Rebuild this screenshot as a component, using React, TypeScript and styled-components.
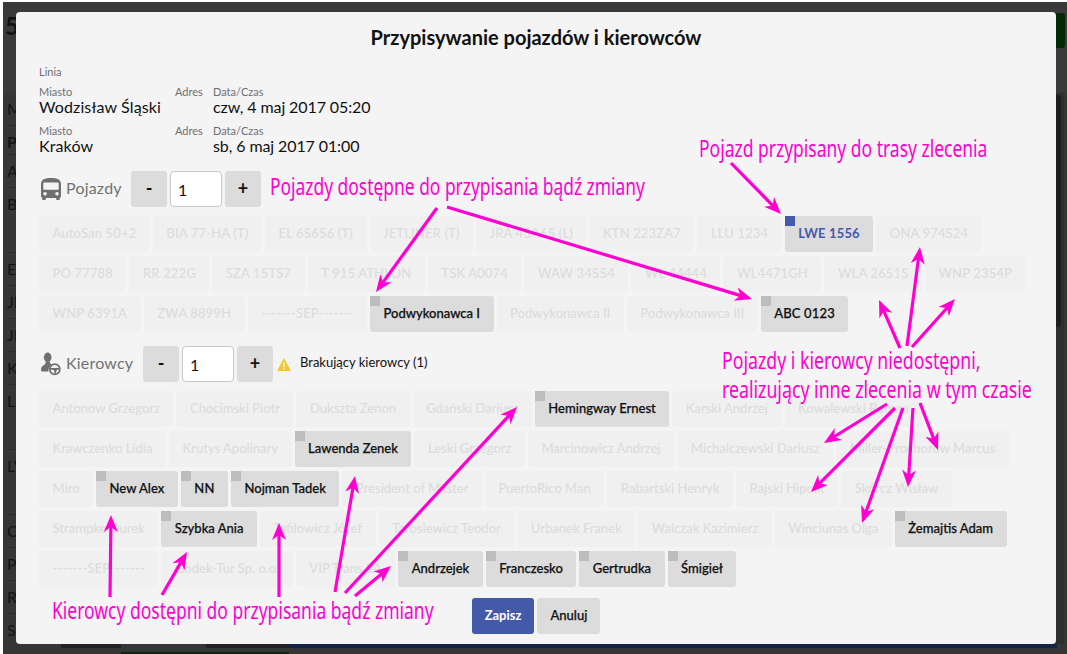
import styled, { createGlobalStyle } from "styled-components";

const GlobalStyle = createGlobalStyle`
  html, body { margin: 0; padding: 0; background: #fff; }
  body { font-family: "Lato", "Liberation Sans", sans-serif; overflow: hidden; }
`;

const PINK = "#ff00d2";

type Mark = "free" | "assigned";

const vehicles: [string, Mark?][] = [
  ["AutoSan 50+2"], ["BIA 77-HA (T)"], ["EL 65656 (T)"], ["JETLINER (T)"], ["JRA 45A65 (L)"], ["KTN 223ZA7"], ["LLU 1234"],
  ["LWE 1556", "assigned"], ["ONA 974S24"], ["PO 77788"], ["RR 222G"], ["SZA 15TS7"], ["T 915 ATHLON"], ["TSK A0074"],
  ["WAW 34554"], ["WL 44444"], ["WL4471GH"], ["WLA 2651S"], ["WNP 2354P"], ["WNP 6391A"], ["ZWA 8899H"], ["-------SEP-------"],
  ["Podwykonawca I", "free"], ["Podwykonawca II"], ["Podwykonawca III"], ["ABC 0123", "free"],
];

const drivers: [string, Mark?][] = [
  ["Antonow Grzegorz"], ["Chocimski Piotr"], ["Dukszta Zenon"], ["Gdański Dariusz"], ["Hemingway Ernest", "free"], ["Karski Andrzej"],
  ["Kowalewski Roman"], ["Krawczenko Lidia"], ["Krutys Apolinary"], ["Lawenda Zenek", "free"], ["Leski Grzegorz"], ["Marcinowicz Andrzej"],
  ["Michalczewski Dariusz"], ["Miller-Prochorow Marcus"], ["Miro"], ["New Alex", "free"], ["NN", "free"], ["Nojman Tadek", "free"],
  ["President of Master"], ["PuertoRico Man"], ["Rabartski Henryk"], ["Rajski Hipolit"], ["Skórcz Wisław"], ["Strampke Durek"],
  ["Szybka Ania", "free"], ["Tafilowicz Józef"], ["Tarosiewicz Teodor"], ["Urbanek Franek"], ["Walczak Kazimierz"], ["Winciunas Olga"],
  ["Żemajtis Adam", "free"], ["-------SEP-------"], ["Godek-Tur Sp. o.o."], ["VIP Trans SA"], ["Andrzejek", "free"], ["Franczesko", "free"],
  ["Gertrudka", "free"], ["Śmigieł", "free"],
];

// page behind the dialog: only the left edge of each row is visible
const backRows: [number, string, boolean?][] = [
  [33, "M"], [29, "P", true], [33, "A"], [65, "B"], [33, "E"], [33, "JE"], [33, "JF"], [33, "K"], [65, "LI"], [65, "LV"], [33, "O"], [33, "P"], [33, "R"], [33, "SZ"],
];

const arrows = [
  [731, 163, 781, 214], [437, 208, 376, 292], [447, 207, 752, 299],
  [900, 348, 879, 300], [907, 346, 920, 247], [912, 347, 955, 299],
  [887, 404, 824, 443], [895, 408, 811, 492], [903, 408, 862, 523], [913, 408, 908, 487], [920, 403, 938, 450],
  [110, 597, 111, 515], [162, 595, 187, 552], [279, 597, 279, 523], [335, 592, 355, 476], [345, 593, 517, 407], [355, 596, 391, 566],
];

const Page = styled.div`
  position: relative;
  width: 1064px;
  height: 652px;
  margin: 2px 0 0 3px;
  background: #363636;
  overflow: hidden;
  display: flex;
  flex-direction: column;
`;

const BackHead = styled.header`
  height: 91px;
  flex: none;
  display: flex;
  justify-content: space-between;
  align-items: flex-start;
  padding: 9px 2px 0 2px;
  box-sizing: border-box;
  background: #3a3a3a;
`;

const BackTitle = styled.div`
  font-size: 24px;
  font-weight: 700;
  color: #111;
`;

const GreenButton = styled.div`
  width: 20px;
  height: 35px;
  margin-top: 2px;
  background: #032a06;
  border-radius: 3px;
`;

const BackBody = styled.div`
  flex: 1;
  display: flex;
  justify-content: space-between;
  min-height: 0;
`;

const BackTable = styled.div`
  flex: 1;
  padding-left: 4px;
`;

const BackRow = styled.div<{ $h: number; $bold?: boolean }>`
  height: ${(p) => p.$h}px;
  box-sizing: border-box;
  border-bottom: 1px solid #2a2a2a;
  padding-top: 6px;
  font-size: 16px;
  line-height: 20px;
  font-weight: ${(p) => (p.$bold ? 700 : 400)};
  color: #141414;
`;

const BackSide = styled.aside`
  width: 8px;
  height: 100%;
  flex: none;
  background: #2e2e2e;
  margin-right: 3px;
  padding-top: 2px;
`;

const BackSidePanel = styled.div`
  width: 5px;
  height: 232px;
  background: #1e1e1e;
  border-radius: 0 3px 3px 0;
`;

const BackFoot = styled.div`
  position: absolute;
  left: 0;
  right: 0;
  bottom: 0;
  height: 10px;
  display: flex;
  background: #363636;
`;

const FootCell = styled.div<{ $w: number; $top: string; $bottom?: string }>`
  width: ${(p) => p.$w}px;
  flex: none;
  height: 100%;
  background: linear-gradient(${(p) => p.$top} 0 4px, transparent 4px 8px, ${(p) => p.$bottom || "transparent"} 8px);
`;

const Dialog = styled.div`
  position: absolute;
  left: 13px;
  top: 10px;
  width: 1040px;
  height: 632px;
  box-sizing: border-box;
  padding: 0 23px;
  background: #f4f4f4;
  border-radius: 4px;
  color: #111;
`;

const Title = styled.h1`
  margin: 0;
  height: 53px;
  font-size: 20px;
  line-height: 50px;
  font-weight: 700;
  text-align: center;
  color: #111;
`;

const LineLabel = styled.div`
  font-size: 11px;
  line-height: 14px;
  color: #6f6f6f;
  margin-bottom: 6px;
`;

const RoutePoint = styled.div`
  display: grid;
  grid-template-columns: 136px 38px 1fr;
  margin-bottom: 8px;
`;

const Field = styled.div`
  display: flex;
  flex-direction: column;
`;

const FieldLabel = styled.span`
  font-size: 11px;
  line-height: 14px;
  color: #6f6f6f;
`;

const FieldValue = styled.span`
  font-size: 16px;
  line-height: 15px;
  padding-bottom: 2px;
  color: #111;
`;

const CityValue = styled(FieldValue)`
  letter-spacing: 0.12px;
`;

const DateValue = styled(FieldValue)`
  letter-spacing: -0.1px;
`;

const CounterRow = styled.div<{ $top: number; $labelWidth: number }>`
  display: flex;
  align-items: center;
  height: 36px;
  margin-top: ${(p) => p.$top}px;
  margin-bottom: 9px;
  & > div:first-child {
    width: ${(p) => p.$labelWidth}px;
  }
`;

const CounterLabel = styled.div`
  display: flex;
  align-items: center;
  flex: none;
  box-sizing: border-box;
  padding-left: 2px;
  gap: 5px;
  font-size: 16px;
  letter-spacing: 0.2px;
  color: #727272;
  height: 100%;
`;

const CounterName = styled.span`
  padding-bottom: 3px;
`;

const StepButton = styled.button`
  width: 36px;
  height: 36px;
  flex: none;
  padding: 0 0 3px;
  border: 0;
  border-radius: 3px;
  background: #dcdcdc;
  font-family: inherit;
  font-size: 18px;
  font-weight: 700;
  color: #111;
`;

const CountInput = styled.input`
  width: 52px;
  height: 36px;
  flex: none;
  box-sizing: border-box;
  margin: 0 3px;
  padding: 0 7px;
  border: 1px solid #c9c9c9;
  border-radius: 4px;
  background: #fff;
  font-family: inherit;
  font-size: 16px;
  color: #111;
`;

const Warning = styled.div`
  display: flex;
  align-items: center;
  margin-left: 4px;
  gap: 9px;
  font-size: 13px;
  color: #111;
  span {
    padding-bottom: 4px;
  }
`;

const ChipList = styled.div`
  display: flex;
  flex-wrap: wrap;
  gap: 4px 3px;
`;

const Chip = styled.button<{ $mark?: Mark; $plate?: boolean }>`
  position: relative;
  height: 36px;
  padding: 0 13.5px 3px;
  border: 0;
  border-radius: 3px;
  font-family: inherit;
  font-size: 13px;
  letter-spacing: ${(p) => (p.$plate ? "0.15px" : "0")};
  font-weight: ${(p) => (p.$mark === "assigned" ? 700 : 500)};
  -webkit-text-stroke: ${(p) => (p.$mark === "free" ? "0.25px" : "0")};
  white-space: nowrap;
  background: ${(p) => (p.$mark ? "#dcdcdc" : "#f0f0f0")};
  color: ${(p) => (p.$mark === "assigned" ? "#4559a9" : p.$mark ? "#111" : "#dcdcdc")};
`;

const Corner = styled.span<{ $mark: Mark }>`
  position: absolute;
  left: 0;
  top: 0;
  width: 10px;
  height: 10px;
  background: ${(p) => (p.$mark === "assigned" ? "#4559a9" : "#bdbdbd")};
`;

const Actions = styled.div`
  display: flex;
  justify-content: center;
  gap: 3px;
  margin-top: 11px;
`;

const ActionButton = styled.button<{ $primary?: boolean }>`
  height: 36px;
  padding: 0 13px 3px;
  border: 0;
  border-radius: 3px;
  font-family: inherit;
  font-size: 13px;
  font-weight: ${(p) => (p.$primary ? 700 : 500)};
  -webkit-text-stroke: ${(p) => (p.$primary ? "0" : "0.25px")};
  background: ${(p) => (p.$primary ? "#4559a9" : "#dcdcdc")};
  color: ${(p) => (p.$primary ? "#fff" : "#111")};
`;

// annotations drawn on top of the screenshot, narrowed because no condensed font is installed
const Note = styled.div<{ $x: number; $y: number; $sx: number }>`
  position: absolute;
  left: ${(p) => p.$x}px;
  top: ${(p) => p.$y}px;
  font-family: "Noto Sans", sans-serif;
  font-size: 23px;
  line-height: 29px;
  white-space: nowrap;
  color: ${PINK};
  transform: scaleX(${(p) => p.$sx});
  transform-origin: left center;
`;

const ArrowLayer = styled.svg`
  position: absolute;
  left: -3px;
  top: -2px;
  pointer-events: none;
`;

function Arrow({ d }: { d: number[] }) {
  const [x1, y1, x2, y2] = d;
  const len = Math.hypot(x2 - x1, y2 - y1);
  const ux = (x2 - x1) / len;
  const uy = (y2 - y1) / len;
  const bx = x2 - ux * 17;
  const by = y2 - uy * 17;
  const nx = -uy;
  const ny = ux;
  const head = [
    `${x2},${y2}`,
    `${bx + nx * 7},${by + ny * 7}`,
    `${x2 - ux * 12},${y2 - uy * 12}`,
    `${bx - nx * 7},${by - ny * 7}`,
  ].join(" ");
  return (
    <g>
      <line x1={x1} y1={y1} x2={x2 - ux * 10} y2={y2 - uy * 10} stroke={PINK} strokeWidth={3.2} />
      <polygon points={head} fill={PINK} />
    </g>
  );
}

function BusIcon() {
  return (
    <svg width="20" height="22" viewBox="0 0 20 22">
      <path
        fill="#707070"
        fillRule="evenodd"
        d="M10 0C4 0 0 1.5 0 6v12c0 1 .5 1.6 1.2 1.8V21c0 .6.4 1 1 1h1.6c.6 0 1-.4 1-1v-1h10.400v1c0 .6.4 1 1 1h1.600c.6 0 1-.4 1-1v-1.200C19.500 19.600 20 19 20 18V6c0-4.500-4-6-10-6zM3 4.500h14c.4 0 .7.3.7.7V11c0 .4-.3.7-.7.7H3c-.4 0-.7-.3-.7-.7V5.200c0-.4.3-.7.7-.7zM4 14a1.800 1.800 0 1 1 0 3.600A1.800 1.800 0 0 1 4 14zm12 0a1.800 1.800 0 1 1 0 3.600 1.800 1.800 0 0 1 0-3.600z"
      />
    </svg>
  );
}

function DriverIcon() {
  return (
    <svg width="20" height="24" viewBox="0 0 21 24">
      <ellipse cx="7" cy="5" rx="4" ry="5" fill="#707070" />
      <path fill="#707070" d="M5 9.500h4c.3 1.500 1 2.200 2.500 3.300A8 8 0 0 0 7.700 20H2c-1.400 0-2-.8-2-2 0-2.800 1.500-4 3-4.700 1.300-.7 1.800-1.800 2-3.800z" />
      <circle cx="14.500" cy="17.500" r="5.300" fill="none" stroke="#707070" strokeWidth="1.800" />
      <path fill="#707070" d="M9.500 16.200h10v1.600l-3 .6-1 4h-1l-1-4-4-.6z" />
    </svg>
  );
}

function WarningIcon() {
  return (
    <svg width="14" height="13" viewBox="0 0 14 13">
      <path fill="#f2c82c" d="M7 0l7 13H0z" />
      <rect x="6.300" y="4.500" width="1.400" height="4.500" fill="#fff" />
      <rect x="6.300" y="9.800" width="1.400" height="1.500" fill="#fff" />
    </svg>
  );
}

function Chips({ items }: { items: [string, Mark?][] }) {
  return (
    <ChipList>
      {items.map(([name, mark], i) => (
        <Chip key={name + i} $mark={mark} $plate={/\d/.test(name) || name === name.toUpperCase()}>
          {mark && <Corner $mark={mark} />}
          {name}
        </Chip>
      ))}
    </ChipList>
  );
}

function Stop({ city, date }: { city: string; date: string }) {
  return (
    <RoutePoint>
      <Field>
        <FieldLabel>Miasto</FieldLabel>
        <CityValue>{city}</CityValue>
      </Field>
      <Field>
        <FieldLabel>Adres</FieldLabel>
      </Field>
      <Field>
        <FieldLabel>Data/Czas</FieldLabel>
        <DateValue>{date}</DateValue>
      </Field>
    </RoutePoint>
  );
}

export default function App() {
  return (
    <>
      <GlobalStyle />
      <Page>
        <BackHead>
          <BackTitle>5</BackTitle>
          <GreenButton />
        </BackHead>
        <BackBody>
          <BackTable>
            {backRows.map(([h, text, bold], i) => (
              <BackRow key={i} $h={h} $bold={bold}>
                {text}
              </BackRow>
            ))}
          </BackTable>
          <BackSide>
            <BackSidePanel />
          </BackSide>
        </BackBody>
        <BackFoot>
          <FootCell $w={58} $top="transparent" />
          <FootCell $w={60} $top="#232323" />
          <FootCell $w={85} $top="transparent" $bottom="#032a06" />
          <FootCell $w={83} $top="#232323" $bottom="#032a06" />
          <FootCell $w={768} $top="#13234a" />
        </BackFoot>
        <Dialog>
          <Title>Przypisywanie pojazdów i kierowców</Title>
          <LineLabel>Linia</LineLabel>
          <Stop city="Wodzisław Śląski" date="czw, 4 maj 2017 05:20" />
          <Stop city="Kraków" date="sb, 6 maj 2017 01:00" />
          <CounterRow $top={16} $labelWidth={92}>
            <CounterLabel>
              <BusIcon />
              <CounterName>Pojazdy</CounterName>
            </CounterLabel>
            <StepButton>-</StepButton>
            <CountInput defaultValue="1" />
            <StepButton>+</StepButton>
          </CounterRow>
          <Chips items={vehicles} />
          <CounterRow $top={14} $labelWidth={104}>
            <CounterLabel>
              <DriverIcon />
              <CounterName>Kierowcy</CounterName>
            </CounterLabel>
            <StepButton>-</StepButton>
            <CountInput defaultValue="1" />
            <StepButton>+</StepButton>
            <Warning>
              <WarningIcon />
              <span>Brakujący kierowcy (1)</span>
            </Warning>
          </CounterRow>
          <Chips items={drivers} />
          <Actions>
            <ActionButton $primary>Zapisz</ActionButton>
            <ActionButton>Anuluj</ActionButton>
          </Actions>
        </Dialog>
        <ArrowLayer width="1067" height="654">
          {arrows.map((d, i) => (
            <Arrow key={i} d={d} />
          ))}
        </ArrowLayer>
        <Note $x={696} $y={132} $sx={0.76}>Pojazd przypisany do trasy zlecenia</Note>
        <Note $x={267} $y={170} $sx={0.757}>Pojazdy dostępne do przypisania bądź zmiany</Note>
        <Note $x={719} $y={344} $sx={0.77}>Pojazdy i kierowcy niedostępni,</Note>
        <Note $x={719} $y={373} $sx={0.771}>realizujący inne zlecenia w tym czasie</Note>
        <Note $x={49} $y={594} $sx={0.761}>Kierowcy dostępni do przypisania bądź zmiany</Note>
      </Page>
    </>
  );
}
